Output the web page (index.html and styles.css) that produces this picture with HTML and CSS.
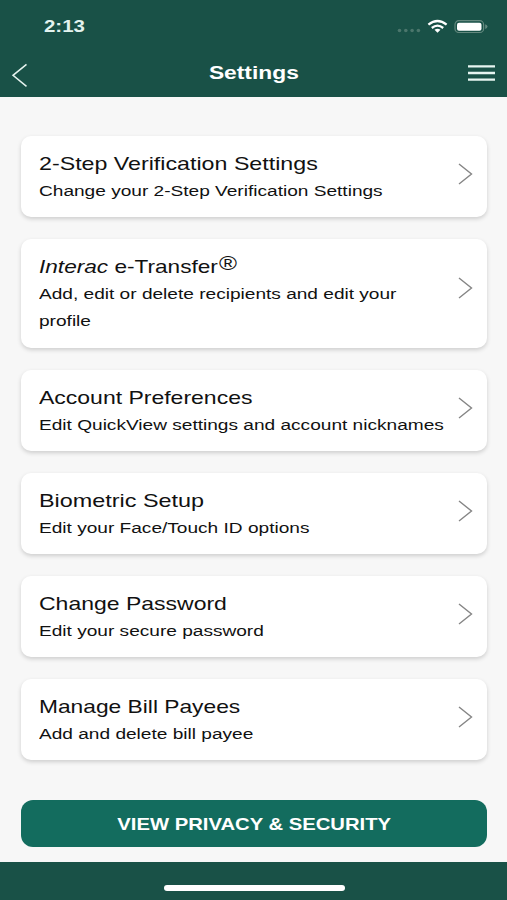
FILE: index.html
```html
<!DOCTYPE html>
<html lang="en">
<head>
<meta charset="utf-8">
<title>Settings</title>
<link rel="stylesheet" href="styles.css">
</head>
<body>
<header class="header">
  <div class="status">
    <span class="time wide">2:13</span>
    <svg class="status-icons" width="92" height="16" viewBox="0 0 92 16">
      <g fill="#4b766c"><circle cx="3.5" cy="11.5" r="1.8"/><circle cx="9.8" cy="11.5" r="1.8"/><circle cx="16.1" cy="11.5" r="1.8"/><circle cx="22.4" cy="11.5" r="1.8"/></g>
      <g fill="none" stroke="#fff" stroke-width="2.3"><path d="M32.4 5.7Q41.5-1.6 50.6 5.7"/><path d="M35.8 9Q41.5 4.2 47.2 9"/></g>
      <path fill="#fff" d="M38.5 10.7Q41.5 8.6 44.5 10.7L41.5 13.7Z"/>
      <rect x="59" y="1.7" width="28.6" height="11.8" rx="3.8" fill="none" stroke="#64897f" stroke-width="1.2"/>
      <rect x="61" y="3.7" width="24.5" height="8" rx="2" fill="#fff"/>
      <path fill="#64897f" d="M89.2 5.3Q91.5 6 91.5 7.6Q91.5 9.2 89.2 9.9Z"/>
    </svg>
  </div>
  <nav class="nav">
    <svg width="18" height="26" viewBox="0 0 18 26" fill="none" stroke="#e6f3ef" stroke-width="1.5"><path d="M15.5 2.3L2 13.3L15.5 24.3"/></svg>
    <h1><span class="wide center">Settings</span></h1>
    <svg width="28" height="26" viewBox="0 0 28 26" stroke="#e6f5f1" stroke-width="2.3"><path d="M0 6.4H27M0 13H27M0 19.6H27"/></svg>
  </nav>
</header>
<main class="content">
  <a class="card"><div class="copy"><h2 class="wide verification">2-Step Verification Settings</h2><p class="wide">Change your 2-Step Verification Settings</p></div><svg class="chevron" viewBox="0 0 15 22"><path d="M1 1L13.5 11L1 21"/></svg></a>
  <a class="card tall"><div class="copy"><h2 class="wide transfer"><em>Interac</em> e-Transfer<sup>®</sup></h2><p class="wide">Add, edit or delete recipients and edit your<br>profile</p></div><svg class="chevron" viewBox="0 0 15 22"><path d="M1 1L13.5 11L1 21"/></svg></a>
  <a class="card"><div class="copy"><h2 class="wide">Account Preferences</h2><p class="wide">Edit QuickView settings and account nicknames</p></div><svg class="chevron" viewBox="0 0 15 22"><path d="M1 1L13.5 11L1 21"/></svg></a>
  <a class="card"><div class="copy"><h2 class="wide biometric">Biometric Setup</h2><p class="wide">Edit your Face/Touch ID options</p></div><svg class="chevron" viewBox="0 0 15 22"><path d="M1 1L13.5 11L1 21"/></svg></a>
  <a class="card"><div class="copy"><h2 class="wide">Change Password</h2><p class="wide">Edit your secure password</p></div><svg class="chevron" viewBox="0 0 15 22"><path d="M1 1L13.5 11L1 21"/></svg></a>
  <a class="card"><div class="copy"><h2 class="wide payees">Manage Bill Payees</h2><p class="wide">Add and delete bill payee</p></div><svg class="chevron" viewBox="0 0 15 22"><path d="M1 1L13.5 11L1 21"/></svg></a>
  <button class="action"><span class="wide center">VIEW PRIVACY &amp; SECURITY</span></button>
</main>
<footer class="footer"><div class="home"></div></footer>
</body>
</html>
```
FILE: styles.css
```css
* { box-sizing: border-box; }
body {
  margin: 0;
  height: 900px;
  display: flex;
  flex-direction: column;
  overflow: hidden;
  background: #f7f7f7;
  color: #111;
  font-family: "Liberation Sans", Arial, sans-serif;
}
h1, h2, p { margin: 0; }
.wide {
  display: block;
  width: max-content;
  white-space: nowrap;
  transform: scaleX(1.22);
  transform-origin: left center;
}
.wide.center { transform-origin: center; }
.header {
  height: 97px;
  flex: none;
  background: #195147;
  color: #fff;
}
.status {
  height: 50px;
  padding: 19px 17px 0 44px;
  display: flex;
  justify-content: space-between;
  align-items: flex-start;
}
.time {
  color: #e3f3ef;
  font-size: 17px;
  font-weight: bold;
  line-height: 16px;
  transform: scaleX(1.2);
}
.status-icons { margin-right: 2px; }
.nav {
  height: 47px;
  padding: 0 11px 0 11px;
  display: flex;
  justify-content: space-between;
  align-items: center;
}
.nav h1 {
  font-size: 18.7px;
  line-height: 24px;
  margin: -1px 0 0 11px;
}
.nav svg { margin-top: 3px; }
.nav svg:last-child { margin-top: -1px; }
.content {
  flex: 1;
  padding: 39px 20px 0 21px;
}
.card {
  height: 80.5px;
  margin-bottom: 22.5px;
  padding: 14px 14px 0 18px;
  display: flex;
  align-items: flex-start;
  justify-content: space-between;
  background: #fff;
  border-radius: 10px;
  box-shadow: 0 2px 4px rgba(0, 0, 0, .17);
}
.card.tall { height: 108.5px; }
.copy { width: 330px; }
.card h2 {
  font-size: 19px;
  font-weight: normal;
  line-height: 28px;
  transform: scaleX(1.21);
}
.card h2.verification { transform: scaleX(1.222); }
.card h2.transfer { transform: scaleX(1.19); }
.card h2.biometric { transform: scaleX(1.23); }
.card h2.payees { transform: scaleX(1.198); }
.card p {
  margin-top: -1.5px;
  font-size: 15.5px;
  line-height: 27.6px;
  transform: scaleX(1.231);
}
sup {
  margin-left: 1px;
  font-size: 20.5px;
  line-height: 0;
  vertical-align: 3px;
}
.chevron {
  width: 15px;
  height: 22px;
  flex: none;
  margin-top: 12.5px;
  fill: none;
  stroke: #858585;
  stroke-width: 1.4;
}
.tall .chevron { margin-top: 24px; }
.action {
  width: 466px;
  height: 47px;
  margin-top: 40px;
  padding: 3px 0 0;
  border: 0;
  border-radius: 12px;
  display: flex;
  align-items: center;
  justify-content: center;
  background: #136c5e;
  color: #fff;
  font-family: inherit;
  font-size: 16.6px;
  font-weight: bold;
}
.footer {
  height: 38px;
  flex: none;
  padding: 23px 0 0 1px;
  background: #195147;
}
.home {
  width: 181px;
  height: 6px;
  margin: 0 auto;
  border-radius: 3px;
  background: #fff;
}
```
